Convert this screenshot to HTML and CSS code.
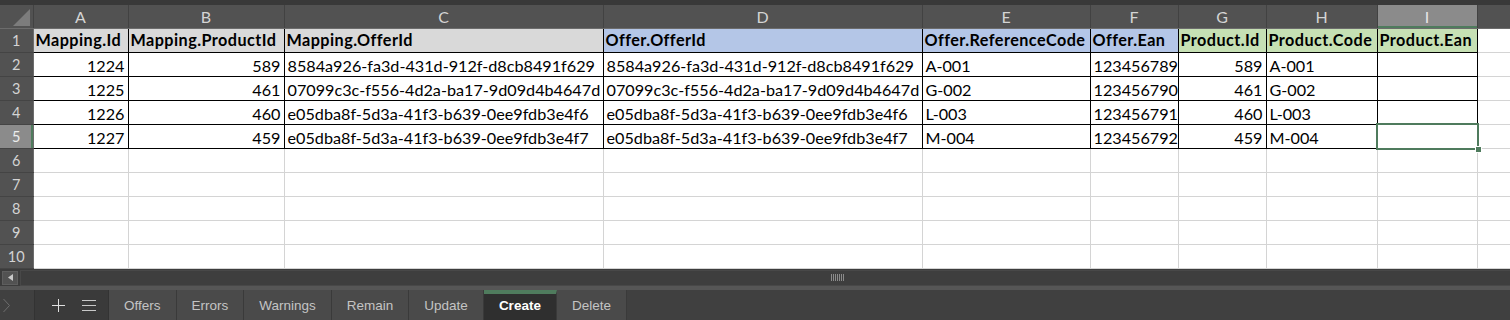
FILE: index.html
```html
<!DOCTYPE html>
<html>
	<head>
	<meta charset="utf-8">
	<title>Create</title>
	<link rel="stylesheet" href="styles.css">
	</head>

	<body>
		<div class="topbar"></div>

		<table class="grid">
			<colgroup>
				<col class="w-rh"><col class="w-a"><col class="w-b"><col class="w-c"><col class="w-d">
				<col class="w-e"><col class="w-f"><col class="w-g"><col class="w-h"><col class="w-i"><col class="w-j">
			</colgroup>
			<thead>
				<tr>
					<th class="corner">
						<svg width="17" height="17" viewBox="0 0 17 17"><polygon points="17,0 17,17 0,17" fill="#7c7c7c"/></svg>
					</th>
					<th>A</th><th>B</th><th>C</th><th>D</th><th>E</th><th>F</th><th>G</th><th>H</th>
					<th class="cur">I</th><th></th>
				</tr>
			</thead>
			<tbody>
				<tr>
					<th>1</th>
					<td class="b hd map">Mapping.Id</td>
					<td class="b hd map">Mapping.ProductId</td>
					<td class="b hd map">Mapping.OfferId</td>
					<td class="b hd offer">Offer.OfferId</td>
					<td class="b hd offer">Offer.ReferenceCode</td>
					<td class="b hd offer">Offer.Ean</td>
					<td class="b hd prod">Product.Id</td>
					<td class="b hd prod">Product.Code</td>
					<td class="b hd prod">Product.Ean</td>
					<td></td>
				</tr>
				<tr>
					<th>2</th>
					<td class="b num">1224</td>
					<td class="b num">589</td>
					<td class="b">8584a926-fa3d-431d-912f-d8cb8491f629</td>
					<td class="b">8584a926-fa3d-431d-912f-d8cb8491f629</td>
					<td class="b">A-001</td>
					<td class="b">123456789</td>
					<td class="b num">589</td>
					<td class="b">A-001</td>
					<td class="b"></td>
					<td></td>
				</tr>
				<tr>
					<th>3</th>
					<td class="b num">1225</td>
					<td class="b num">461</td>
					<td class="b">07099c3c-f556-4d2a-ba17-9d09d4b4647d</td>
					<td class="b">07099c3c-f556-4d2a-ba17-9d09d4b4647d</td>
					<td class="b">G-002</td>
					<td class="b">123456790</td>
					<td class="b num">461</td>
					<td class="b">G-002</td>
					<td class="b"></td>
					<td></td>
				</tr>
				<tr>
					<th>4</th>
					<td class="b num">1226</td>
					<td class="b num">460</td>
					<td class="b">e05dba8f-5d3a-41f3-b639-0ee9fdb3e4f6</td>
					<td class="b">e05dba8f-5d3a-41f3-b639-0ee9fdb3e4f6</td>
					<td class="b">L-003</td>
					<td class="b">123456791</td>
					<td class="b num">460</td>
					<td class="b">L-003</td>
					<td class="b"></td>
					<td></td>
				</tr>
				<tr>
					<th class="cur">5</th>
					<td class="b num">1227</td>
					<td class="b num">459</td>
					<td class="b">e05dba8f-5d3a-41f3-b639-0ee9fdb3e4f7</td>
					<td class="b">e05dba8f-5d3a-41f3-b639-0ee9fdb3e4f7</td>
					<td class="b">M-004</td>
					<td class="b">123456792</td>
					<td class="b num">459</td>
					<td class="b">M-004</td>
					<td class="b active"><span class="selbox"><span class="handle"></span></span></td>
					<td></td>
				</tr>
				<tr><th>6</th><td></td><td></td><td></td><td></td><td></td><td></td><td></td><td></td><td></td><td></td></tr>
				<tr><th>7</th><td></td><td></td><td></td><td></td><td></td><td></td><td></td><td></td><td></td><td></td></tr>
				<tr><th>8</th><td></td><td></td><td></td><td></td><td></td><td></td><td></td><td></td><td></td><td></td></tr>
				<tr><th>9</th><td></td><td></td><td></td><td></td><td></td><td></td><td></td><td></td><td></td><td></td></tr>
				<tr><th>10</th><td></td><td></td><td></td><td></td><td></td><td></td><td></td><td></td><td></td><td></td></tr>
			</tbody>
		</table>

		<div class="hscroll">
			<div class="scroll-btn">
				<svg width="5" height="7" viewBox="0 0 5 7"><polygon points="5,0 5,7 0,3.5" fill="#c8c8c8"/></svg>
			</div>
			<div class="thumb">
				<span class="grip"></span>
			</div>
		</div>

		<div class="tabbar">
			<div class="nav">
				<svg width="9" height="15" viewBox="0 0 9 15"><polyline points="1.5,1 7.5,7.5 1.5,14" fill="none" stroke="#6e6e6e" stroke-width="1"/></svg>
			</div>
			<div class="tools">
				<svg width="13" height="13" viewBox="0 0 13 13"><path d="M6.5 0V13M0 6.5H13" stroke="#e0e0e0" stroke-width="1"/></svg>
				<svg width="14" height="11" viewBox="0 0 14 11"><path d="M0 0.5H14M0 5.5H14M0 10.5H14" stroke="#c8c8c8" stroke-width="1"/></svg>
			</div>
			<div class="tab">Offers</div>
			<div class="tab">Errors</div>
			<div class="tab">Warnings</div>
			<div class="tab">Remain</div>
			<div class="tab">Update</div>
			<div class="tab active">Create</div>
			<div class="tab">Delete</div>
		</div>
	</body>
</html>
```

FILE: styles.css
```css
body, html {
	margin: 0;
	padding: 0;
}

body {
	width: 1510px;
	height: 320px;
	overflow: hidden;
	background: #404040;
	font-family: "Lato", "Liberation Sans", sans-serif;
}

.topbar {
	height: 5px;
	background: #393939;
}

/* sheet grid */
.grid {
	border-collapse: collapse;
	table-layout: fixed;
	width: 1510px;
}

.w-rh { width: 33px; }
.w-a { width: 95px; }
.w-b { width: 156px; }
.w-c { width: 319px; }
.w-d { width: 319px; }
.w-e { width: 168px; }
.w-f { width: 88px; }
.w-g { width: 88px; }
.w-h { width: 111px; }
.w-i { width: 100px; }
.w-j { width: 33px; }

.grid th,
.grid td {
	padding: 0;
	height: 23px;
	white-space: nowrap;
	overflow: hidden;
}

.grid thead th {
	background: #525252;
	color: #d4d4d4;
	font-weight: normal;
	font-size: 16px;
	border-right: 1px solid #424242;
	border-bottom: 1px solid #6c6c6c;
}

.grid thead th.corner {
	text-align: right;
	vertical-align: bottom;
	padding: 0 3px 2px 0;
	height: 21px;
}

.corner svg {
	display: block;
	margin-left: auto;
}

.grid thead th.cur {
	background: #8b8b8b;
	color: #e6e6e6;
	box-shadow: inset 0 -2px #4f7b5d;
}

.grid tbody th {
	background: #525252;
	color: #d4d4d4;
	font-weight: normal;
	font-size: 14.5px;
	text-align: center;
	border-right: 1px solid #6c6c6c;
	border-bottom: 1px solid #444;
}

.grid tbody th.cur {
	background: #8b8b8b;
	color: #ececec;
	box-shadow: inset -2px 0 #4f7b5d;
}

.grid td {
	background: #fff;
	color: #000;
	font-size: 16.2px;
	line-height: 16px;
	vertical-align: bottom;
	height: 21px;
	padding: 0 2px 2px 3px;
	border: 1px solid #d4d4d4;
}

.grid td.b {
	border: 1px solid #000;
}

.grid td.num {
	text-align: right;
	padding-right: 3px;
}

.grid td.hd {
	font-weight: bold;
	letter-spacing: 0.45px;
	padding-left: 2px;
	vertical-align: middle;
}

.map { background: #d9d9d9 !important; }
.offer { background: #b4c6e7 !important; }
.prod { background: #c6e0b4 !important; }

.grid td.active {
	position: relative;
	overflow: visible;
}

.selbox {
	position: absolute;
	left: -2px;
	top: -2px;
	right: -2px;
	bottom: -2px;
	border: 2px solid #4f7b5d;
}

.handle {
	position: absolute;
	right: -5px;
	bottom: -5px;
	width: 5px;
	height: 5px;
	background: #4f7b5d;
	border: 1px solid #fff;
}

/* horizontal scroll */
.hscroll {
	height: 17px;
	display: flex;
	align-items: center;
	gap: 2px;
	padding-left: 2px;
	background: #3c3c3c;
	border-bottom: 4px solid #565656;
}

.scroll-btn {
	width: 14px;
	height: 12px;
	background: #525252;
	border: 1px solid #5e5e5e;
	display: flex;
	align-items: center;
	justify-content: center;
}

.thumb {
	flex: 1;
	height: 14px;
	border: 1px solid #484848;
	border-right: 0;
	background: #3e3e3e;
	display: flex;
	align-items: center;
	padding-left: 810px;
}

.grip {
	width: 13px;
	height: 7px;
	background: repeating-linear-gradient(90deg, #8a8a8a 0 1px, transparent 1px 2px);
}

/* sheet tabs */
.tabbar {
	height: 30px;
	display: flex;
	background: #404040;
	font-family: "Liberation Sans", Arial, sans-serif;
	font-size: 13.5px;
	color: #c4c4c4;
}

.nav {
	width: 35px;
	border-right: 1px solid #333;
	display: flex;
	align-items: center;
	padding-left: 2px;
	box-sizing: border-box;
}

.tools {
	width: 74px;
	background: #3a3a3a;
	display: flex;
	align-items: center;
	gap: 17px;
	padding-left: 17px;
	box-sizing: border-box;
	border-right: 1px solid #333;
}

.tab {
	display: flex;
	align-items: center;
	padding: 0 15px;
	background: #4a4a4a;
	border-right: 1px solid #3a3a3a;
}

.tab.active {
	background: #2f2f2f;
	color: #fff;
	font-weight: bold;
	border-top: 4px solid #4f7b5d;
	padding-bottom: 4px;
}
```
